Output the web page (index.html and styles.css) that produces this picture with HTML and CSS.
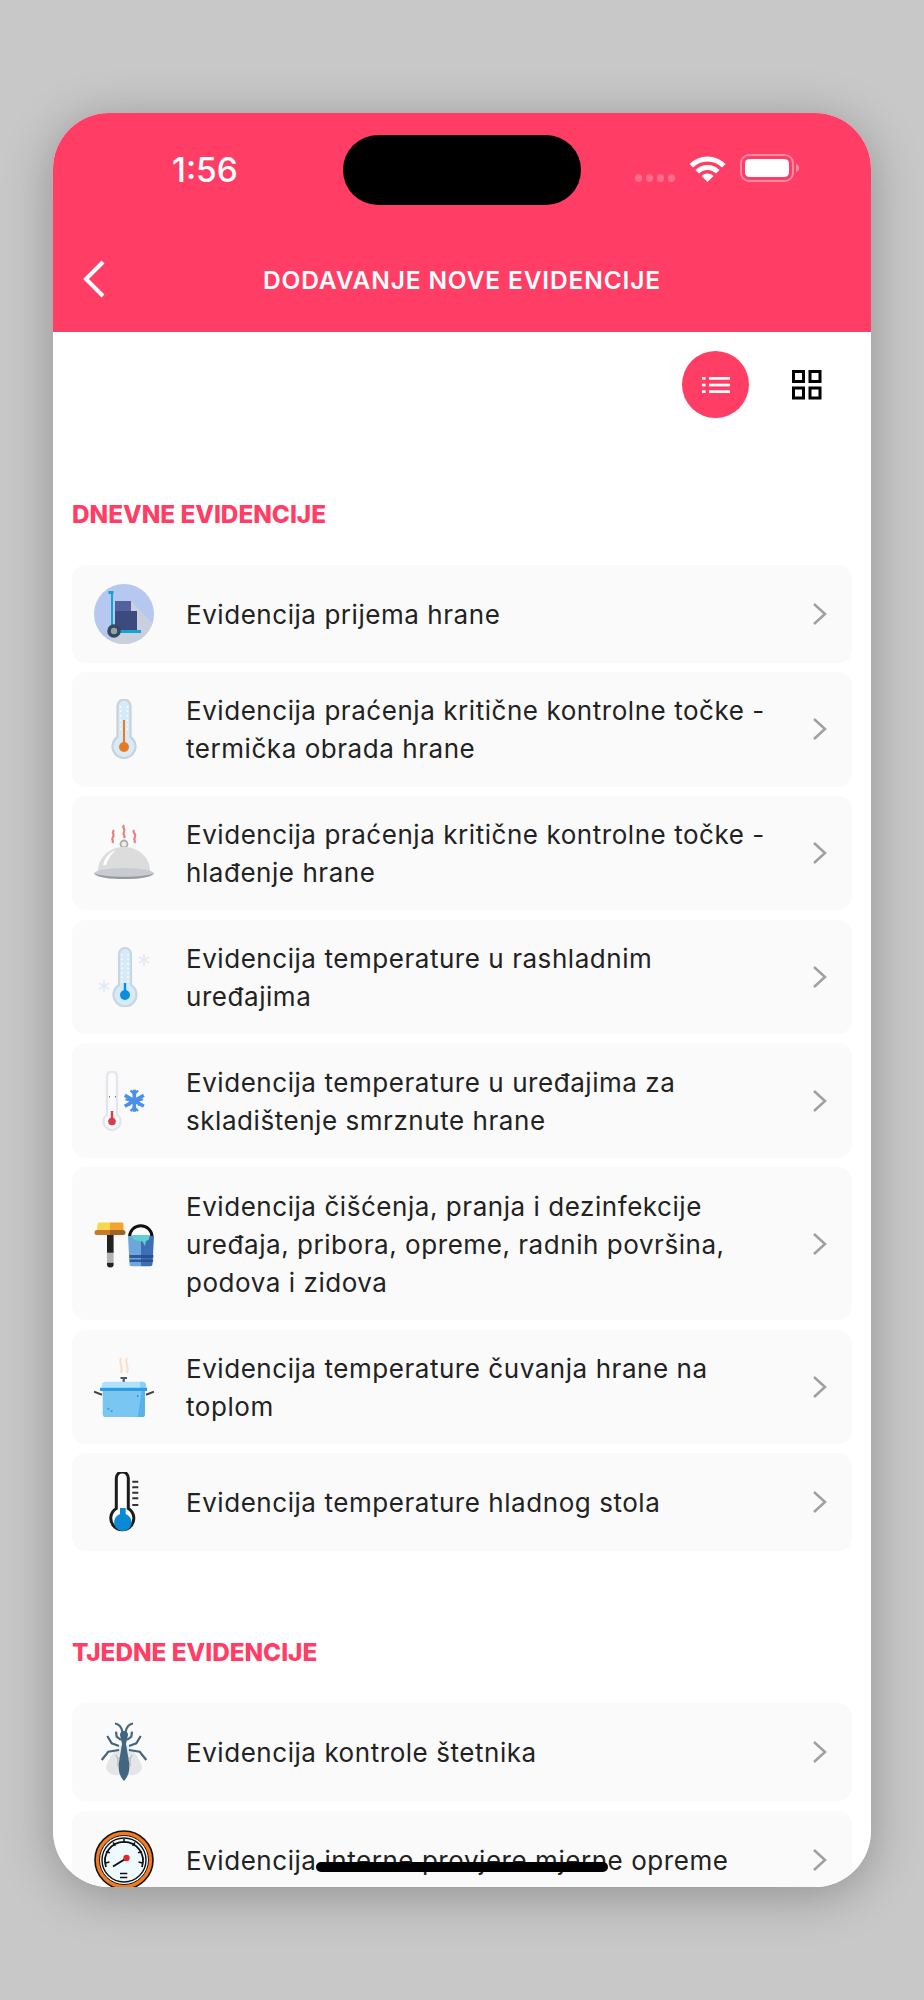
FILE: index.html
```html
<!DOCTYPE html>
<html lang="hr">
<head>
<meta charset="utf-8">
<title>Dodavanje nove evidencije</title>
<link rel="stylesheet" href="styles.css">
</head>
<body>
<div class="phone">
  <header class="header">
    <div class="status">
      <span class="time">1:56</span>
      <div class="status-icons">
        <div class="signal"><i></i><i></i><i></i><i></i></div>
        <svg class="wifi" width="37" height="27" viewBox="0 0 36 27"><g fill="#fff"><path d="M18 27L12 21A8.500 8.500 0 0 1 24 21Z"/><path d="M6 15A17 17 0 0 1 30 15L26.500 18.500A12 12 0 0 0 9.500 18.500Z"/><path d="M0 9A25.400 25.400 0 0 1 36 9L32.500 12.500A20.500 20.500 0 0 0 3.500 12.500Z"/></g></svg>
        <svg class="battery" width="60" height="28" viewBox="0 0 60 28"><rect x="1" y="1" width="52" height="26" rx="8" fill="none" stroke="#fff" stroke-opacity=".4" stroke-width="2"/><rect x="5" y="5" width="44" height="18" rx="4.500" fill="#fff"/><path d="M56 10c2 .5 3 2 3 4s-1 3.500-3 4z" fill="#fff" fill-opacity=".4"/></svg>
      </div>
    </div>
    <div class="navbar">
      <svg class="back" width="24" height="38" viewBox="0 0 24 38"><path d="M21 2L4 19l17 17" fill="none" stroke="#fff" stroke-width="4"/></svg>
      <h1 class="title">DODAVANJE NOVE EVIDENCIJE</h1>
    </div>
  </header>
  <div class="island"></div>

  <main class="content">
    <div class="toolbar">
      <button class="view active">
        <svg width="28" height="16" viewBox="0 0 28 16"><g fill="#fff"><rect y="0" width="3.500" height="2.700"/><rect y="6.700" width="3.500" height="2.700"/><rect y="13.300" width="3.500" height="2.700"/><rect x="7" y="0" width="21" height="2.700"/><rect x="7" y="6.700" width="21" height="2.700"/><rect x="7" y="13.300" width="21" height="2.700"/></g></svg>
      </button>
      <button class="view">
        <svg width="30" height="30" viewBox="0 0 30 30"><g fill="none" stroke="#000" stroke-width="3"><rect x="1.500" y="1.500" width="10" height="10"/><rect x="18" y="1.500" width="10" height="10"/><rect x="1.500" y="18" width="10" height="10"/><rect x="18" y="18" width="10" height="10"/></g></svg>
      </button>
    </div>

    <h2 class="section first">DNEVNE EVIDENCIJE</h2>
    <ul class="list">
      <li class="row one">
        <span class="ico"><svg width="60" height="60" viewBox="0 0 60 60"><circle cx="30" cy="30" r="30" fill="#b6c8f0"/><path d="M37 17L58.500 39A30 30 0 0 1 16 56.500L20 47z" fill="#c9cfdc"/><rect x="21" y="17" width="16" height="10" fill="#54619f"/><rect x="21" y="27" width="22" height="20" fill="#3c4a80"/><path d="M17 8h2v38h28v3H17z" fill="#12a5d2"/><rect x="14.500" y="7" width="5" height="3" fill="#12a5d2"/><circle cx="20" cy="47" r="5" fill="#8fa3ad" stroke="#34495a" stroke-width="3.500"/></svg></span>
        <span class="txt">Evidencija prijema hrane</span><svg class="chev" width="16" height="24" viewBox="0 0 16 24"><path d="M2 2l11 10L2 22" fill="none" stroke="#a0a0a0" stroke-width="2.500"/></svg>
      </li>
      <li class="row two">
        <span class="ico"><svg width="60" height="60" viewBox="0 0 60 60"><path d="M23.500 7a6.500 6.500 0 0 1 13 0v31a11.500 11.500 0 1 1-13 0z" fill="#d6eafa" stroke="#c8d2da" stroke-width="2.200"/><path d="M26.500 7v26M33.500 7v26" stroke="#fff" stroke-width="1.500" stroke-dasharray="1.500 3"/><rect x="29" y="21" width="2" height="26" fill="#e87b20"/><circle cx="30" cy="48" r="5" fill="#e87b20"/></svg></span>
        <span class="txt">Evidencija praćenja kritične kontrolne točke - termička obrada hrane</span><svg class="chev" width="16" height="24" viewBox="0 0 16 24"><path d="M2 2l11 10L2 22" fill="none" stroke="#a0a0a0" stroke-width="2.500"/></svg>
      </li>
      <li class="row two">
        <span class="ico"><svg width="60" height="60" viewBox="0 0 60 60"><g fill="none" stroke="#e88080" stroke-width="2.200"><path d="M20 7c-3 3 1 4-1 7s1 3-.5 6"/><path d="M30 2c-2.500 3 2 4 0 7s2 3 0 6"/><path d="M40 7c-2 3 3 4 1 7s1 3-.5 6"/></g><circle cx="30" cy="21" r="3.500" fill="#eee" stroke="#aaa" stroke-width="1.800"/><path d="M4 48c0-14 12-24 26-24s26 10 26 24z" fill="#dcdcdc"/><path d="M9 42c2-8 7-13 13-15-5 4-8 9-10 15z" fill="#fff"/><ellipse cx="30" cy="50.500" rx="30" ry="5.500" fill="#c8cbcf"/><path d="M.5 50c5 5 54 5 59 0-1 8-58 8-59 0z" fill="#96999d"/></svg></span>
        <span class="txt">Evidencija praćenja kritične kontrolne točke - hlađenje hrane</span><svg class="chev" width="16" height="24" viewBox="0 0 16 24"><path d="M2 2l11 10L2 22" fill="none" stroke="#a0a0a0" stroke-width="2.500"/></svg>
      </li>
      <li class="row two">
        <span class="ico"><svg width="60" height="60" viewBox="0 0 60 60"><path d="M25 7a6 6 0 0 1 12 0v31a11.500 11.500 0 1 1-12 0z" fill="#d6eafa" stroke="#c8d6e2" stroke-width="2.200"/><path d="M28 7v28M34 7v28" stroke="#fff" stroke-width="1.500" stroke-dasharray="1.500 3"/><rect x="29.800" y="36" width="2.400" height="12" fill="#0a8fe0"/><circle cx="31" cy="48" r="5" fill="#0a8fe0"/><g stroke="#e3ebf5" stroke-width="2"><path d="M50 7v12M44.800 10l10.400 6M55.200 10l-10.400 6"/><path d="M10 33v12M4.800 36l10.400 6M15.200 36l-10.400 6"/></g></svg></span>
        <span class="txt">Evidencija temperature u rashladnim uređajima</span><svg class="chev" width="16" height="24" viewBox="0 0 16 24"><path d="M2 2l11 10L2 22" fill="none" stroke="#a0a0a0" stroke-width="2.500"/></svg>
      </li>
      <li class="row two">
        <span class="ico"><svg width="60" height="60" viewBox="0 0 60 60"><path d="M13 5.500a5 5 0 0 1 10 0v38a8.500 8.500 0 1 1-10 0z" fill="#fbfbfc" stroke="#e3e6ea" stroke-width="2.400"/><rect x="16.800" y="40" width="2.400" height="10" fill="#dc3a50"/><circle cx="18" cy="50.500" r="3.800" fill="#dc3a50"/><path d="M15 25.700h1M21 25.700h1" stroke="#777" stroke-width="1.400"/><g stroke="#4a90e8" stroke-width="3.600" fill="none"><path d="M40.300 18.700v22M30.800 24.200l19 11M49.800 24.200l-19 11"/><path d="M36.500 19.500l3.800 3.800 3.800-3.800M36.500 40l3.800-3.800 3.800 3.800M31.500 28.300l5 1.400-1.400 5M49 28.300l-5 1.400 1.400 5" stroke-width="2.200"/></g></svg></span>
        <span class="txt">Evidencija temperature u uređajima za skladištenje smrznute hrane</span><svg class="chev" width="16" height="24" viewBox="0 0 16 24"><path d="M2 2l11 10L2 22" fill="none" stroke="#a0a0a0" stroke-width="2.500"/></svg>
      </li>
      <li class="row three">
        <span class="ico"><svg width="60" height="60" viewBox="0 0 60 60"><path d="M3.500 10a1.500 1.500 0 0 1 1.500-1.500h11V16H3z" fill="#f8d64e"/><path d="M16 8.500h12a1.500 1.500 0 0 1 1.500 1.500v6H16z" fill="#f2a52e"/><path d="M3 16h13v5H3a2.500 2.500 0 0 1 0-5z" fill="#c97a28"/><path d="M16 16h13a2.500 2.500 0 0 1 0 5H16z" fill="#9f6226"/><rect x="13" y="21" width="6.600" height="18" fill="#222"/><rect x="13" y="38.700" width="6.600" height="10" fill="#b3b3b3"/><path d="M13 48.700h6.600v1.500a3.300 3.300 0 0 1-6.600 0z" fill="#222"/><path d="M35.500 23a11.300 11.300 0 0 1 22.600 0" fill="none" stroke="#111" stroke-width="3"/><path d="M34 22h13v30.300h-9.500a2 2 0 0 1-2-2z" fill="#6da5dd"/><path d="M47 22h13l-1.500 28.300a2 2 0 0 1-2 2H47z" fill="#3d6fb5"/><path d="M38 21h18l-1.500 5-2.500 1-1 5-2.500-4.500-5.500-1-4-1.500z" fill="#5fd0d0"/><path d="M35.200 41h24.300l-.2 3H35.400zM35.500 45.500h23.700l-.2 2.500H35.700z" fill="#274a8e" fill-opacity=".85"/></svg></span>
        <span class="txt">Evidencija čišćenja, pranja i dezinfekcije uređaja, pribora, opreme, radnih površina, podova i zidova</span><svg class="chev" width="16" height="24" viewBox="0 0 16 24"><path d="M2 2l11 10L2 22" fill="none" stroke="#a0a0a0" stroke-width="2.500"/></svg>
      </li>
      <li class="row two">
        <span class="ico"><svg width="60" height="60" viewBox="0 0 60 60"><g fill="none" stroke="#fbdcc2" stroke-width="1.800"><path d="M27 1c-3 5 3 9 0 15"/><path d="M33 1c-3 5 3 9 0 15"/></g><path d="M26.500 21h6.500M29.700 21v5" stroke="#4a5560" stroke-width="2.200"/><path d="M7.700 30.700v-2a4 4 0 0 1 4-4H48a4 4 0 0 1 4 4v2z" fill="#aee1fb"/><path d="M46 24.700h2a4 4 0 0 1 4 4v2h-6z" fill="#8cd0f5"/><rect x="6" y="30.700" width="47" height="3.300" fill="#2f9be0"/><path d="M8.700 34H51v23a3.500 3.500 0 0 1-3.500 3.500H12.200a3.500 3.500 0 0 1-3.500-3.500z" fill="#79c6f3"/><path d="M47.700 34H51v23a3.500 3.500 0 0 1-3.500 3.500h-3.800z" fill="#5cb2e8"/><path d="M0 34.700l8 3M60 34.700l-8 3" stroke="#444" stroke-width="2"/><circle cx="14.300" cy="51.700" r="1" fill="#3d8fd0"/><circle cx="17.700" cy="54" r="1" fill="#3d8fd0"/><circle cx="43.700" cy="39" r="1" fill="#3d8fd0"/></svg></span>
        <span class="txt">Evidencija temperature čuvanja hrane na toplom</span><svg class="chev" width="16" height="24" viewBox="0 0 16 24"><path d="M2 2l11 10L2 22" fill="none" stroke="#a0a0a0" stroke-width="2.500"/></svg>
      </li>
      <li class="row one">
        <span class="ico"><svg width="60" height="60" viewBox="0 0 60 60"><path d="M22.500 6a6 6 0 0 1 12 0v30.500a11.500 11.500 0 1 1-12 0z" transform="translate(-.200 0)" fill="#fff" stroke="#1c1c1c" stroke-width="3"/><path d="M26 36h5.700v6a8.700 8.700 0 1 1-5.700 0z" fill="#0a8ad6"/><path d="M38.300 9.700h6M38.300 15.300h6M38.300 20.700h6M38.300 26.300h6M38.300 33h6" stroke="#333" stroke-width="2"/></svg></span>
        <span class="txt">Evidencija temperature hladnog stola</span><svg class="chev" width="16" height="24" viewBox="0 0 16 24"><path d="M2 2l11 10L2 22" fill="none" stroke="#a0a0a0" stroke-width="2.500"/></svg>
      </li>
    </ul>

    <h2 class="section">TJEDNE EVIDENCIJE</h2>
    <ul class="list">
      <li class="row one">
        <span class="ico"><svg width="60" height="60" viewBox="0 0 60 60"><path d="M29 23c-7 2-14 12-17 22 1 7 8 9 14 8z" fill="#e3e5e7"/><path d="M31 23c7 2 14 12 17 22-1 7-8 9-14 8z" fill="#e3e5e7"/><path d="M22 33l2 4 3-2M24 37v7M38 33l-2 4-3-2M36 37v7" fill="none" stroke="#bfc3c6" stroke-width="1.500"/><path d="M30 9c3 0 4 2 4 4l-2 9 3 18c1 7 0 14-5 19-5-5-6-12-5-19l3-18-2-9c0-2 1-4 4-4z" fill="#43657f"/><g fill="none" stroke="#43657f" stroke-width="2.200"><path d="M28.500 10c-1-5-4-8-7.500-8.500M31.500 10c1-5 4-8 7.500-8.500"/><path d="M27 18l-4.300-3.300-.7-5M33 18l4.300-3.300.7-5"/><path d="M25 24l-7.300-2.700-4.400-7.300M35 24l7.300-2.700 4.400-7.300"/><path d="M25 28l-10.700 1.700L7.700 38M35 28l10.700 1.700L52.300 38"/></g></svg></span>
        <span class="txt">Evidencija kontrole štetnika</span><svg class="chev" width="16" height="24" viewBox="0 0 16 24"><path d="M2 2l11 10L2 22" fill="none" stroke="#a0a0a0" stroke-width="2.500"/></svg>
      </li>
      <li class="row gauge">
        <span class="ico"><svg width="60" height="60" viewBox="0 0 60 60"><circle cx="30" cy="30" r="29" fill="#f47a1f" stroke="#111" stroke-width="1.600"/><circle cx="30" cy="30" r="24.500" fill="#fff" stroke="#111" stroke-width="1"/><circle cx="30" cy="30" r="22" fill="#effaff" stroke="#111" stroke-width="1.400"/><path d="M12 37a19 19 0 1 1 36 0" fill="none" stroke="#111" stroke-width="1.800"/><path d="M30 9v4M19 12.400l2.400 3.300M41 12.400l-2.400 3.300M12 21.500l4 1.400M48 21.500l-4 1.400M11.600 32.900l3.900-1M48.400 32.900l-3.900-1" stroke="#111" stroke-width="1.500"/><path d="M19 36.500l13-8" stroke="#111" stroke-width="2"/><circle cx="32.500" cy="28" r="3.200" fill="#e5262b"/><path d="M26 43.500h7.300M26 47.500h7.300" stroke="#111" stroke-width="1.500"/></svg></span>
        <span class="txt">Evidencija interne provjere mjerne opreme</span><svg class="chev" width="16" height="24" viewBox="0 0 16 24"><path d="M2 2l11 10L2 22" fill="none" stroke="#a0a0a0" stroke-width="2.500"/></svg>
      </li>
    </ul>
  </main>
  <div class="home"></div>
</div>
</body>
</html>
```

FILE: styles.css
```css
* { box-sizing: border-box; }
html, body { margin: 0; padding: 0; }
body {
  height: 2000px;
  background: #c8c8c8;
  overflow: hidden;
  font-family: "Inter", "Liberation Sans", sans-serif;
}
.phone {
  position: relative;
  width: 818px;
  height: 1774px;
  margin: 113px auto 0;
  background: #fff;
  border-radius: 56px;
  overflow: hidden;
}
body::before {
  content: "";
  position: absolute;
  left: 53px;
  top: 113px;
  width: 818px;
  height: 1774px;
  border-radius: 56px;
  box-shadow: 0 8px 50px rgba(0, 0, 0, .28);
}
.header {
  height: 219px;
  background: #ff3d65;
  color: #fff;
}
.status {
  height: 105px;
  display: flex;
  justify-content: space-between;
  align-items: flex-start;
  padding: 37px 71px 0 119px;
}
.time {
  font-family: "Inter", sans-serif;
  font-size: 33.500px;
  font-weight: 500;
  line-height: 40px;
}
.status-icons {
  display: flex;
  align-items: flex-start;
  gap: 14px;
  padding-top: 4px;
}
.signal { display: flex; gap: 3.500px; margin-top: 20px; }
.signal i { width: 7.500px; height: 7.500px; border-radius: 50%; background: rgba(255, 255, 255, .25); }
.wifi { margin-top: 1px; }
.navbar {
  position: relative;
  display: flex;
  justify-content: center;
  align-items: center;
  height: 60px;
  margin-top: 32px;
}
.back { position: absolute; left: 29px; top: 10px; }
.title {
  margin: 0;
  font-family: "Inter", sans-serif;
  font-size: 24.500px;
  font-weight: 600;
  letter-spacing: .85px;
}
.island {
  position: absolute;
  left: 290px;
  top: 22px;
  width: 238px;
  height: 70px;
  border-radius: 35px;
  background: #000;
}
.content { padding: 19px 19px 0; }
.toolbar {
  display: flex;
  justify-content: flex-end;
  align-items: center;
  gap: 24px;
  padding-right: 12px;
}
.view {
  width: 67px;
  height: 67px;
  padding: 0;
  border: 0;
  border-radius: 50%;
  background: transparent;
  display: flex;
  align-items: center;
  justify-content: center;
}
.view.active { background: #ff3d65; }
.section {
  margin: 83px 0 33px;
  color: #ff3d65;
  font-family: "Inter", sans-serif;
  font-size: 24.300px;
  font-weight: 800;
  line-height: 36px;
}
.section.first { margin-top: 78px; }
.list {
  list-style: none;
  margin: 0;
  padding: 0;
  display: flex;
  flex-direction: column;
  gap: 9.200px;
}
.row {
  display: flex;
  align-items: center;
  flex: none;
  background: #fafafa;
  border-radius: 14px;
  padding: 0 24px 0 22px;
  color: #222;
}
.row.one { height: 98px; }
.row.two { height: 114.500px; }
.row.three { height: 153.500px; }
.row.gauge { height: 98px; }
.ico {
  flex: none;
  width: 60px;
  height: 60px;
  margin-right: 32px;
  display: flex;
}
.txt {
  flex: 1;
  font-family: "Inter", sans-serif;
  font-size: 26px;
  font-weight: 380;
  letter-spacing: .55px;
  line-height: 38px;
  padding: 2px 47px 0 0;
}
.chev { flex: none; }
.home {
  position: absolute;
  left: 263px;
  top: 1749px;
  width: 292px;
  height: 10px;
  border-radius: 5px;
  background: #000;
  filter: blur(.6px);
}
```
